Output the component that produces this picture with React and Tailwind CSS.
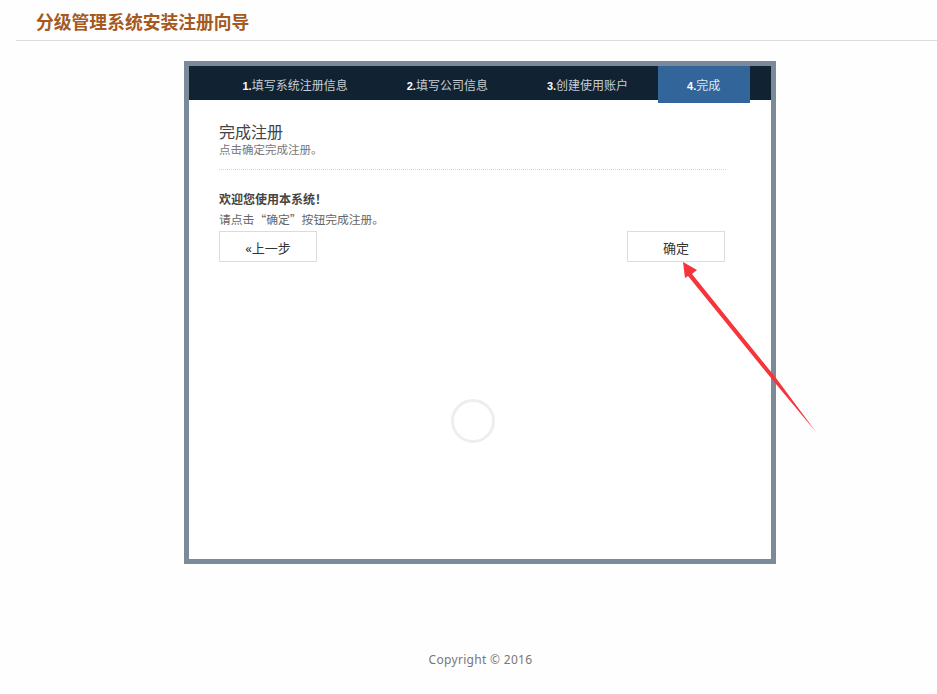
import React from 'react';

const FONT = "font-['Noto_Sans','Noto_Sans_CJK_SC',sans-serif]";

const steps = [
  { num: '1.', label: '填写系统注册信息' },
  { num: '2.', label: '填写公司信息' },
  { num: '3.', label: '创建使用账户' },
  { num: '4.', label: '完成', active: true },
];

const StepTab = ({ num, label, active }) => (
  <div
    className={`px-[29.5px] text-xs leading-[39px] whitespace-nowrap ${
      active ? 'h-[37px] bg-[#32659a] text-[#dfe7ef]' : 'h-[34px] text-[#c6cdd3]'
    }`}
  >
    <span className="font-['Liberation_Sans',sans-serif] text-[11px] font-bold text-white">{num}</span>
    {label}
  </div>
);

const WizardButton = ({ children }) => (
  <button className="w-[98px] h-[31px] pt-[4px] bg-white border border-[#dcdcdc] text-[13px] text-[#333]">
    {children}
  </button>
);

const App = () => {
  return (
    <div className={`relative w-[937px] h-[694px] overflow-hidden bg-[#fefefe] ${FONT}`}>
      <header className="ml-4 h-[41px] pl-5 border-b border-[#dcdcdc]">
        <h1 className="text-[17.8px] leading-[44px] font-bold text-[#a5591f]">分级管理系统安装注册向导</h1>
      </header>

      <main className="relative ml-[184px] mt-5 w-[592px] h-[503px] border-[5px] border-[#7a8a99] bg-white">
        <nav className="flex h-[34px] pl-[24px] bg-[#112232]">
          {steps.map(step => (
            <StepTab key={step.num} {...step} />
          ))}
        </nav>

        <section className="pl-[30px] pr-[45px] pt-[22px]">
          <h2 className="text-base leading-5 text-[#444]">完成注册</h2>
          <p className="text-[11.5px] leading-[15px] text-[#777]">点击确定完成注册。</p>
          <div className="mt-[12px] border-t border-dotted border-[#d4d4d4]"></div>

          <p className="mt-[22px] text-xs leading-4 font-bold text-[#444]">欢迎您使用本系统！</p>
          <p className="mt-[3px] font-['Noto_Sans_CJK_SC',sans-serif] text-[11.8px] leading-4 text-[#666]">请点击“确定”按钮完成注册。</p>

          <div className="mt-[4px] pr-[1px] flex justify-between">
            <WizardButton>«上一步</WizardButton>
            <WizardButton>确定</WizardButton>
          </div>
        </section>

        <div className="absolute left-[262px] top-[333px] w-[44px] h-[44px] rounded-full border-[3px] border-[#eeeeee]"></div>
      </main>

      <footer className="mt-[88px] text-center pl-[24px] text-xs leading-4 tracking-[0.3px] text-[#777]">
        Copyright © 2016
      </footer>

      {/* red annotation arrow */}
      <svg className="absolute left-0 top-0 pointer-events-none" width="937" height="694">
        <polygon points="683,262 697,270 692,274 776,378 816,432 771,378 688,276 685,278" fill="#f5343c" />
      </svg>
    </div>
  );
};

export default App;
